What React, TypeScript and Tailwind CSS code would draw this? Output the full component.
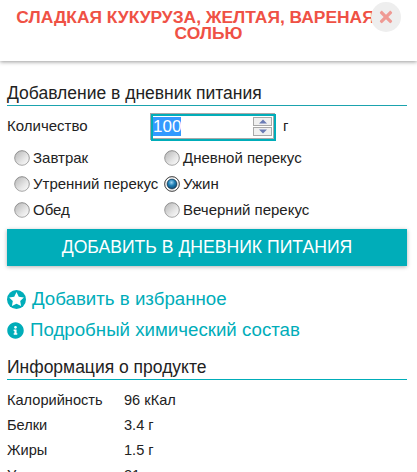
import { FaInfoCircle, FaTimes } from "react-icons/fa";

function Radio({ checked = false }: { checked?: boolean }) {
  return (
    <svg width="16" height="16" viewBox="0 0 16 16" className="shrink-0">
      <defs>
        <linearGradient id="rim" x1="0" y1="0" x2="0" y2="1">
          <stop offset="0" stopColor="#8a8a8a" />
          <stop offset="1" stopColor="#a8a8a8" />
        </linearGradient>
        <linearGradient id="face" x1="0" y1="0" x2="1" y2="1">
          <stop offset="0" stopColor="#b4b4b4" />
          <stop offset="0.6" stopColor="#e6e6e6" />
          <stop offset="1" stopColor="#ffffff" />
        </linearGradient>
        <radialGradient id="dot" cx="0.45" cy="0.35" r="0.7">
          <stop offset="0" stopColor="#9fd4f2" />
          <stop offset="0.45" stopColor="#1f7fb5" />
          <stop offset="1" stopColor="#0b3f66" />
        </radialGradient>
      </defs>
      <circle cx="8" cy="8" r="7.3" fill="url(#face)" stroke="url(#rim)" strokeWidth="1" />
      {checked && (
        <>
          <circle cx="8" cy="8" r="7.3" fill="#fff" stroke="#4a4a4a" strokeWidth="1" />
          <circle cx="8" cy="8" r="5" fill="url(#dot)" stroke="#123" strokeWidth="0.6" />
        </>
      )}
    </svg>
  );
}

function RadioLabel({ label, checked }: { label: string; checked?: boolean }) {
  return (
    <div className="flex items-center gap-[3px] h-[26px] whitespace-nowrap">
      <Radio checked={checked} />
      <span>{label}</span>
    </div>
  );
}

function Spin({ up }: { up?: boolean }) {
  return (
    <div className="w-[19px] h-[9px] bg-[#f0f0f0] border border-[#a9a9a9] flex items-center justify-center">
      <svg width="8" height="5" viewBox="0 0 8 5">
        <path d={up ? "M4 0.5L8 4.5H0Z" : "M0 0.5H8L4 4.5Z"} fill="#6a7bb5" />
      </svg>
    </div>
  );
}

function StarCircle() {
  return (
    <svg width="19" height="19" viewBox="0 0 18 18" className="shrink-0">
      <circle cx="9" cy="9" r="9" fill="#00adb9" />
      <path
        d="M9 1.9l2.15 4.4 4.85.7-3.5 3.4.83 4.8L9 12.95 4.67 15.2l.83-4.8L2 7l4.85-.7z"
        fill="#fff"
      />
    </svg>
  );
}

function Row({ k, v }: { k: string; v: string }) {
  return (
    <div className="flex h-[25px] items-center">
      <div className="w-[117px] text-[14.6px]">{k}</div>
      <div className="text-[14.6px]">{v}</div>
    </div>
  );
}

export default function App() {
  return (
    <div className="w-[417px] h-[472px] overflow-hidden bg-white text-[#222] text-[15px] font-['Liberation_Sans',Arial,sans-serif]">
      <header className="relative h-[61px] shadow-[0_1px_4px_rgba(0,0,0,0.4)] pt-[9px] text-center text-[#ef5145] text-[17.4px] leading-[16px] font-bold px-[10px]">
        <div className="pr-[26px] whitespace-nowrap">СЛАДКАЯ КУКУРУЗА, ЖЕЛТАЯ, ВАРЕНАЯ</div>
        <div>СОЛЬЮ</div>
        <div className="absolute right-[16px] top-[2px] w-[30px] h-[30px] rounded-full bg-[#eeeeee] flex items-center justify-center">
          <FaTimes className="text-[#ef9a94] text-[18px]" />
        </div>
      </header>

      <main className="px-[7px] pr-[10px]">
        <h2 className="mt-[20px] text-[17.5px] leading-[24px] text-[#222]">
          Добавление в дневник питания
        </h2>
        <div className="h-px bg-[#1ba3ae]" />

        <div className="flex items-center h-[28px] mt-[6px]">
          <div className="w-[143px]">Количество</div>
          <div className="relative w-[125px] h-[27px] border-[2px] border-[#a9a9a9] flex items-center">
            <div className="absolute top-[-1px] left-[-1px] right-[-3px] bottom-[-3px] border-[2px] border-[#00adb9]" />
            <span className="ml-[1px] bg-[#3399ff] text-white text-[17px] leading-[19px]">100</span>
            <div className="ml-auto mr-[1px] flex flex-col gap-[1px]">
              <Spin up />
              <Spin />
            </div>
          </div>
          <div className="ml-[8px]">г</div>
        </div>

        <div className="flex mt-[5px] pl-[7px]">
          <div className="w-[150px]">
            <RadioLabel label="Завтрак" />
            <RadioLabel label="Утренний перекус" />
            <RadioLabel label="Обед" />
          </div>
          <div>
            <RadioLabel label="Дневной перекус" />
            <RadioLabel label="Ужин" checked />
            <RadioLabel label="Вечерний перекус" />
          </div>
        </div>

        <button className="mt-[6px] w-full h-[37px] bg-[#00adb9] text-white text-[17.6px] shadow-[0_1px_4px_rgba(0,0,0,0.3)]">
          ДОБАВИТЬ В ДНЕВНИК ПИТАНИЯ
        </button>

        <div className="mt-[18px] flex items-center gap-[6px] text-[#00adb9] text-[18.7px] h-[31px]">
          <StarCircle />
          <span>Добавить в избранное</span>
        </div>
        <div className="flex items-center gap-[6px] text-[#00adb9] text-[18.7px] h-[31px]">
          <FaInfoCircle className="text-[17px] shrink-0" />
          <span>Подробный химический состав</span>
        </div>

        <h2 className="mt-[9px] text-[17.5px] leading-[24px] text-[#222]">
          Информация о продукте
        </h2>
        <div className="h-px bg-[#00adb9]" />

        <div className="mt-[8px]">
          <Row k="Калорийность" v="96 кКал" />
          <Row k="Белки" v="3.4 г" />
          <Row k="Жиры" v="1.5 г" />
          <Row k="Углеводы" v="21 г" />
        </div>
      </main>
    </div>
  );
}
